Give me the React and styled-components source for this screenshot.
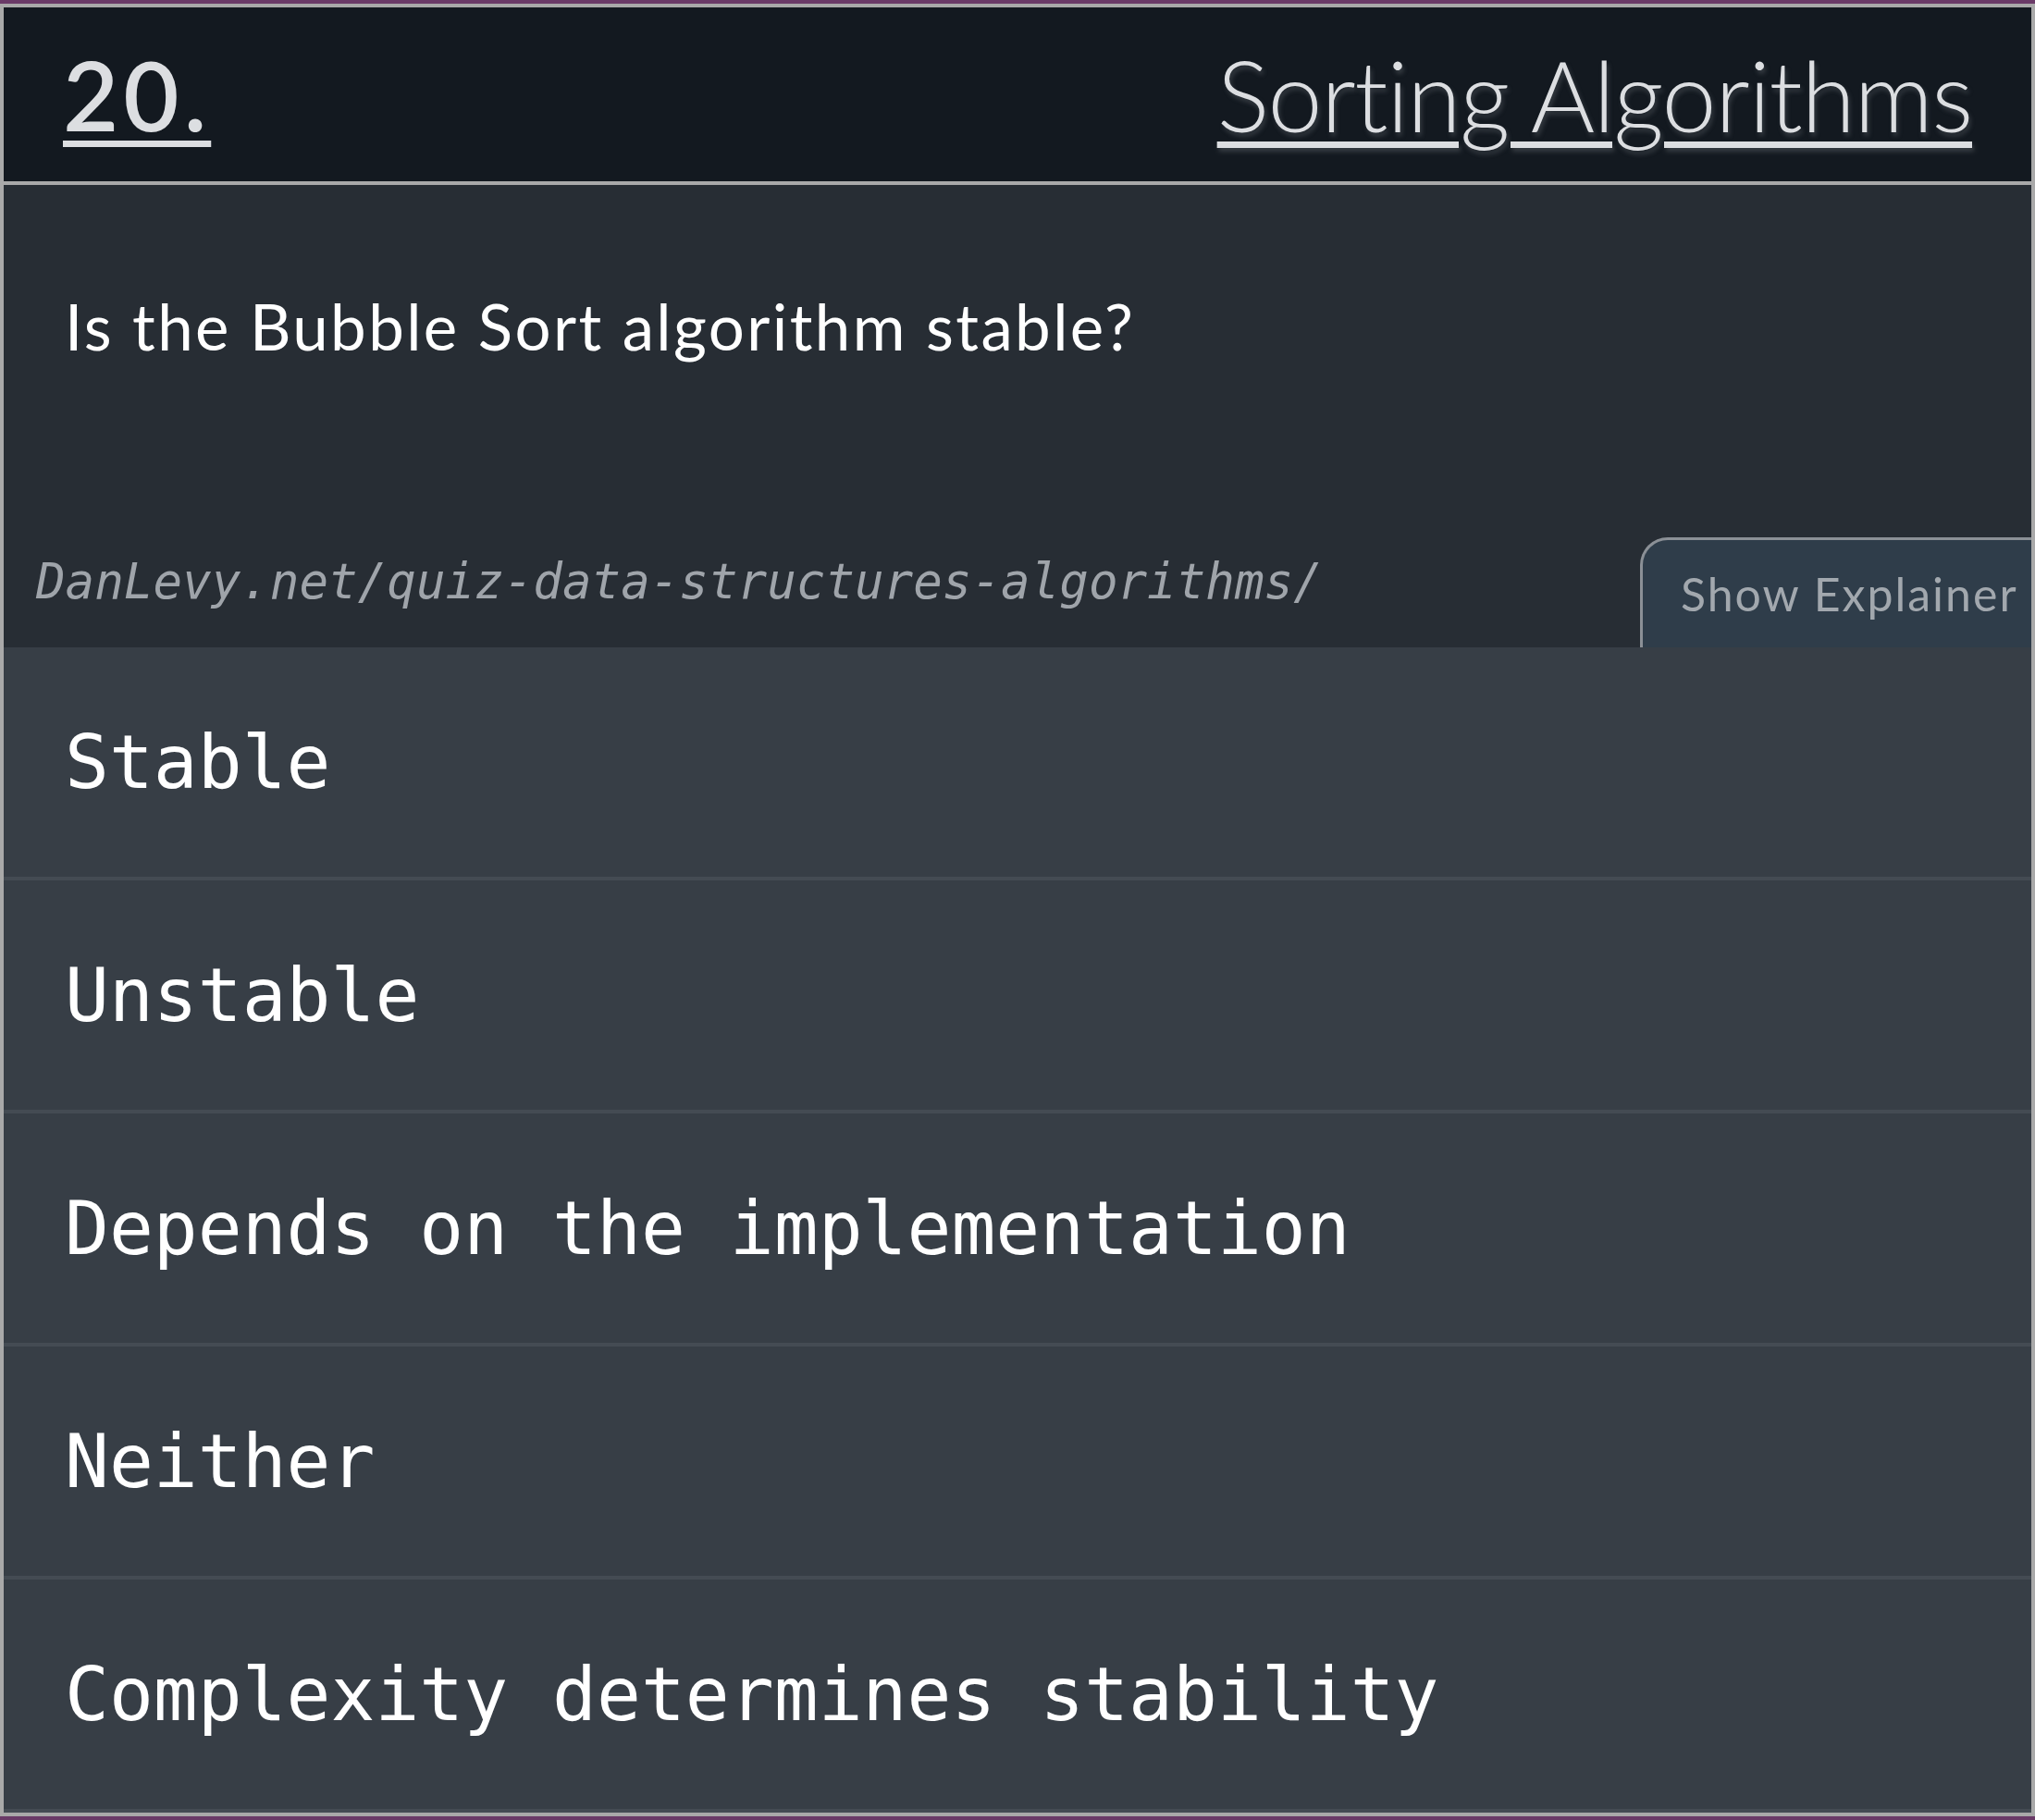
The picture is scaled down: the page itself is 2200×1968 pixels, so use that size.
import React from "react";
import styled, { createGlobalStyle } from "styled-components";

const Global = createGlobalStyle`
  html, body {
    margin: 0;
    padding: 0;
    background: #6a3a67;
  }
  body {
    padding: 4px 0;
    font-family: "Lato", "Noto Sans", sans-serif;
    font-variant-ligatures: none;
  }
`;

const Card = styled.section`
  border: 4px solid #a9a9a9;
  background: #272d34;
  display: flex;
  flex-direction: column;
`;

const Header = styled.header`
  box-sizing: border-box;
  background: #131920;
  border-bottom: 4px solid #a9a9a9;
  height: 192px;
  padding: 0 64px;
  display: flex;
  align-items: center;
  justify-content: space-between;
`;

const Number = styled.a`
  font-family: "Lato", sans-serif;
  font-weight: 600;
  font-size: 104px;
  letter-spacing: 5px;
  color: #dcdee1;
  text-decoration: underline;
  text-decoration-thickness: 7px;
  text-underline-offset: 10px;
  line-height: 1;
`;

const Title = styled.a`
  font-family: "Lato", sans-serif;
  font-weight: 300;
  font-size: 106px;
  letter-spacing: -1.4px;
  font-variant-ligatures: none;
  color: #dcdee1;
  text-decoration: underline;
  text-decoration-thickness: 7px;
  text-underline-offset: 10px;
  text-shadow: 2px 4px 5px rgba(120, 125, 132, 0.35);
  line-height: 1;
`;

const Question = styled.div`
  height: 500px;
  display: flex;
  flex-direction: column;
  justify-content: space-between;
  background: #272d34;
`;

const Prompt = styled.p`
  margin: 0;
  padding: 112px 64px 0 66px;
  font-family: "Lato", sans-serif;
  font-size: 69px;
  font-weight: 400;
  letter-spacing: 2.4px;
  line-height: 1.2;
  color: #ffffff;
`;

const Footer = styled.div`
  display: flex;
  align-items: flex-end;
  justify-content: space-between;
`;

const SourceLink = styled.span`
  font-family: "DejaVu Sans Mono", monospace;
  font-style: italic;
  font-size: 52.5px;
  color: #9fa4aa;
  padding: 0 0 40px 35px;
  line-height: 1.2;
`;

const ExplainButton = styled.button`
  box-sizing: border-box;
  width: 423px;
  height: 119px;
  background: #2f3d4a;
  border: 3px solid #8b9096;
  border-right: none;
  border-bottom: none;
  border-top-left-radius: 30px;
  padding: 0 0 0 41px;
  text-align: left;
  font-family: "Lato", sans-serif;
  font-size: 50px;
  letter-spacing: 2px;
  color: #a2a8ae;
  cursor: pointer;
`;

const Answers = styled.ol`
  list-style: none;
  margin: 0;
  padding: 0;
`;

const Answer = styled.li`
  box-sizing: border-box;
  height: 252px;
  background: #373e46;
  border-bottom: 4px solid #444b53;
  padding: 0 64px 0 66px;
  display: flex;
  align-items: center;
  font-family: "DejaVu Sans Mono", monospace;
  font-size: 79.6px;
  color: #ffffff;
  white-space: pre;
`;

const answers = [
  "Stable",
  "Unstable",
  "Depends on the implementation",
  "Neither",
  "Complexity determines stability",
];

export default function App() {
  return (
    <>
      <Global />
      <Card>
        <Header>
          <Number href="#20">20.</Number>
          <Title href="#sorting">Sorting Algorithms</Title>
        </Header>
        <Question>
          <Prompt>Is the Bubble Sort algorithm stable?</Prompt>
          <Footer>
            <SourceLink>DanLevy.net/quiz-data-structures-algorithms/</SourceLink>
            <ExplainButton>Show Explainer</ExplainButton>
          </Footer>
        </Question>
        <Answers>
          {answers.map((a) => (
            <Answer key={a}>{a}</Answer>
          ))}
        </Answers>
      </Card>
    </>
  );
}
